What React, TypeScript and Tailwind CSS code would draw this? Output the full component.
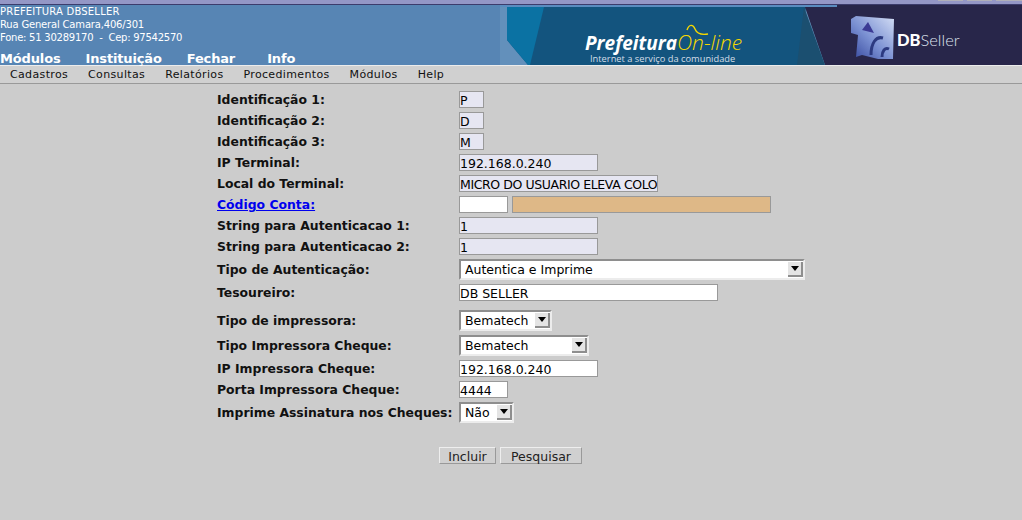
const sansFont = "font-['DejaVu_Sans',sans-serif]";

const inputBase =
  "h-[17px] border border-[#999999] px-0 pt-px text-[12.5px] leading-[15px] text-black outline-none font-['DejaVu_Sans',sans-serif]";

function Field({ value, width, bg, extra = "" }: { value: string; width: string; bg: string; extra?: string }) {
  return <input readOnly value={value} className={`${inputBase} ${width} ${bg} ${extra}`} />;
}

function Combo({ value, width }: { value: string; width: string }) {
  return (
    <div className={`relative h-[21px] ${width}`}>
      <select
        defaultValue={value}
        className="block h-full w-full appearance-none rounded-none border-2 border-t-[#8e8e8e] border-l-[#8e8e8e] border-r-[#ececec] border-b-[#ececec] bg-white pl-[4px] text-[12.5px] leading-[17px] text-black outline-none font-['DejaVu_Sans',sans-serif]"
      >
        <option>{value}</option>
      </select>
      <span className="pointer-events-none absolute top-[3px] right-[2px] flex h-[15px] w-[15px] items-center justify-center border-r-2 border-b-2 border-r-[#8e8e8e] border-b-[#8e8e8e] bg-[#e4e4e4]">
        <svg width="8" height="5" viewBox="0 0 8 5">
          <path d="M0 0h8L4 5z" fill="#000" />
        </svg>
      </span>
    </div>
  );
}

function Row({ label, children, className = "" }: { label: React.ReactNode; children: React.ReactNode; className?: string }) {
  return (
    <div className={`flex items-center ${className}`}>
      <div className="w-[242px] whitespace-nowrap text-[12.4px] font-bold leading-[15px] text-[#111111]">{label}</div>
      <div className="flex gap-1">{children}</div>
    </div>
  );
}

function Banner() {
  return (
    <div className="relative h-[60px] w-[522px] shrink-0">
      {/* arte do banner */}
      <svg className="absolute inset-0" width="522" height="60" viewBox="0 0 522 60">
        <defs>
          <linearGradient id="logoFace" x1="1" y1="0" x2="0" y2="1">
            <stop offset="0" stopColor="#d4def5" />
            <stop offset="0.55" stopColor="#7a90d2" />
            <stop offset="1" stopColor="#34469c" />
          </linearGradient>
        </defs>
        <rect x="0" y="0" width="522" height="60" fill="#6390bb" />
        <rect x="0" y="0" width="337" height="2" fill="#5a8cc0" />
        <polygon points="7,2 306,2 298,60 28,60 7,35" fill="#13547e" />
        <polygon points="7,2 44,2 30,60 28,60 7,35" fill="#0b72a3" />
        <polygon points="305,2 337,2 337,0 522,0 522,60 325,60" fill="#28264a" />
        <polygon points="304,2 325,60 297,60" fill="#1b4f70" />
        <g className="blur-[0.5px]">
          <polygon points="351,14 356,11 394,14 393,54 378,54 362,50 356,52 358,30 351,28" fill="url(#logoFace)" />
          <polygon points="362,25 368,17 374,28" fill="#3b3a94" />
          <path d="M371 50 C371 38 376 31 383 33 M382 52 C382 46 385 42 389 44" stroke="#2c3a80" strokeWidth="3" fill="none" />
        </g>
        <path d="M187 25 C189 19 193 19 195 24 C197 29 202 30 208 29" stroke="#f6d800" strokeWidth="1.4" fill="none" />
      </svg>
      <div className="absolute top-[27px] left-[85px] flex items-baseline font-['Open_Sans',sans-serif] italic leading-[20px]">
        <span className="text-[19px] font-bold text-white">Prefeitura</span>
        <span className="text-[21px] font-light text-[#f6d800]">On-line</span>
      </div>
      <div className="absolute top-[48px] left-[90px] whitespace-nowrap font-['Open_Sans',sans-serif] text-[9.3px] leading-[11px] text-[#d4dee8]">
        Internet a serviço da comunidade
      </div>
      <div className="absolute top-[25px] left-[397px] font-['Lato',sans-serif] text-[16.5px] leading-[20px] text-[#dfe3ee]">
        <span className="font-black text-white">DB</span>
        <span className="font-light">Seller</span>
      </div>
    </div>
  );
}

export default function App() {
  const menus = ["Cadastros", "Consultas", "Relatórios", "Procedimentos", "Módulos", "Help"];

  return (
    <div className={`h-[520px] w-[1022px] overflow-hidden bg-[#cccccc] ${sansFont}`}>
      {/* topo */}
      <div className="flex h-[4px] justify-end gap-[4px] bg-[#9497c6]">
        <div className="h-px w-[25px] bg-[#b0b0b8]" />
        <div className="h-px w-[25px] bg-[#b0b0b8]" />
        <div className="h-px w-[26px] bg-[#b0b0b8]" />
      </div>
      <div className="flex h-[61px] border-t border-[#3c3c6c] bg-[#5785b4]">
        <div className="flex flex-1 flex-col text-white">
          <div className="text-[10px] leading-[13px]">
            <div className="tracking-[0.2px]">PREFEITURA DBSELLER</div>
            <div className="tracking-[-0.18px]">Rua General Camara,406/301</div>
            <div className="whitespace-pre tracking-[-0.24px]">Fone: 51 30289170  -  Cep: 97542570</div>
          </div>
          <div className="mt-[7px] flex gap-[25px] text-[13px] leading-[15px] font-bold tracking-[-0.15px]">
            <span>Módulos</span>
            <span>Instituição</span>
            <span>Fechar</span>
            <span className="ml-[7px]">Info</span>
          </div>
        </div>
        <Banner />
      </div>

      {/* menu */}
      <div className="flex h-[19px] items-center gap-[20px] border-t border-b border-t-[#ececec] border-b-[#999999] bg-[#d0d0d0] pl-[10px] text-[11px] leading-[14px] tracking-[0.35px] text-[#111111]">
        {menus.map((m) => (
          <span key={m}>{m}</span>
        ))}
      </div>

      {/* formulário */}
      <div className="flex flex-col gap-1 pt-[7px] pl-[217px]">
        <Row label="Identificação 1:">
          <Field value="P" width="w-[25px]" bg="bg-[#e6e6f2]" />
        </Row>
        <Row label="Identificação 2:">
          <Field value="D" width="w-[25px]" bg="bg-[#e6e6f2]" />
        </Row>
        <Row label="Identificação 3:">
          <Field value="M" width="w-[25px]" bg="bg-[#e6e6f2]" />
        </Row>
        <Row label="IP Terminal:">
          <Field value="192.168.0.240" width="w-[139px]" bg="bg-[#e6e6f2]" />
        </Row>
        <Row label="Local do Terminal:">
          <Field value="MICRO DO USUARIO ELEVA COLO" width="w-[199px]" bg="bg-[#e6e6f2]" extra="tracking-[-0.4px]" />
        </Row>
        <Row label={<a href="#" className="text-[#0000ee] underline">Código Conta:</a>}>
          <Field value="" width="w-[49px]" bg="bg-white" />
          <Field value="" width="w-[259px]" bg="bg-[#deb887]" />
        </Row>
        <Row label="String para Autenticacao 1:">
          <Field value="1" width="w-[139px]" bg="bg-[#e6e6f2]" />
        </Row>
        <Row label="String para Autenticacao 2:">
          <Field value="1" width="w-[139px]" bg="bg-[#e6e6f2]" />
        </Row>
        <Row label="Tipo de Autenticação:">
          <Combo value="Autentica e Imprime" width="w-[346px]" />
        </Row>
        <Row label="Tesoureiro:">
          <Field value="DB SELLER" width="w-[259px]" bg="bg-white" />
        </Row>
        <Row label="Tipo de impressora:" className="mt-[5px]">
          <Combo value="Bematech" width="w-[93px]" />
        </Row>
        <Row label="Tipo Impressora Cheque:">
          <Combo value="Bematech" width="w-[130px]" />
        </Row>
        <Row label="IP Impressora Cheque:">
          <Field value="192.168.0.240" width="w-[139px]" bg="bg-white" />
        </Row>
        <Row label="Porta Impressora Cheque:">
          <Field value="4444" width="w-[49px]" bg="bg-white" />
        </Row>
        <Row label="Imprime Assinatura nos Cheques:">
          <Combo value="Não" width="w-[55px]" />
        </Row>
      </div>

      <div className="mt-[24px] flex gap-1 pl-[439px]">
        <button className="h-[17px] w-[57px] border border-[#999999] border-t-[#eeeeee] border-l-[#eeeeee] bg-[#d0d0d0] pt-px text-[12.5px] leading-[15px] text-[#222222]">
          Incluir
        </button>
        <button className="h-[17px] w-[82px] border border-[#999999] border-t-[#eeeeee] border-l-[#eeeeee] bg-[#d0d0d0] pt-px text-[12.5px] leading-[15px] text-[#222222]">
          Pesquisar
        </button>
      </div>
    </div>
  );
}
